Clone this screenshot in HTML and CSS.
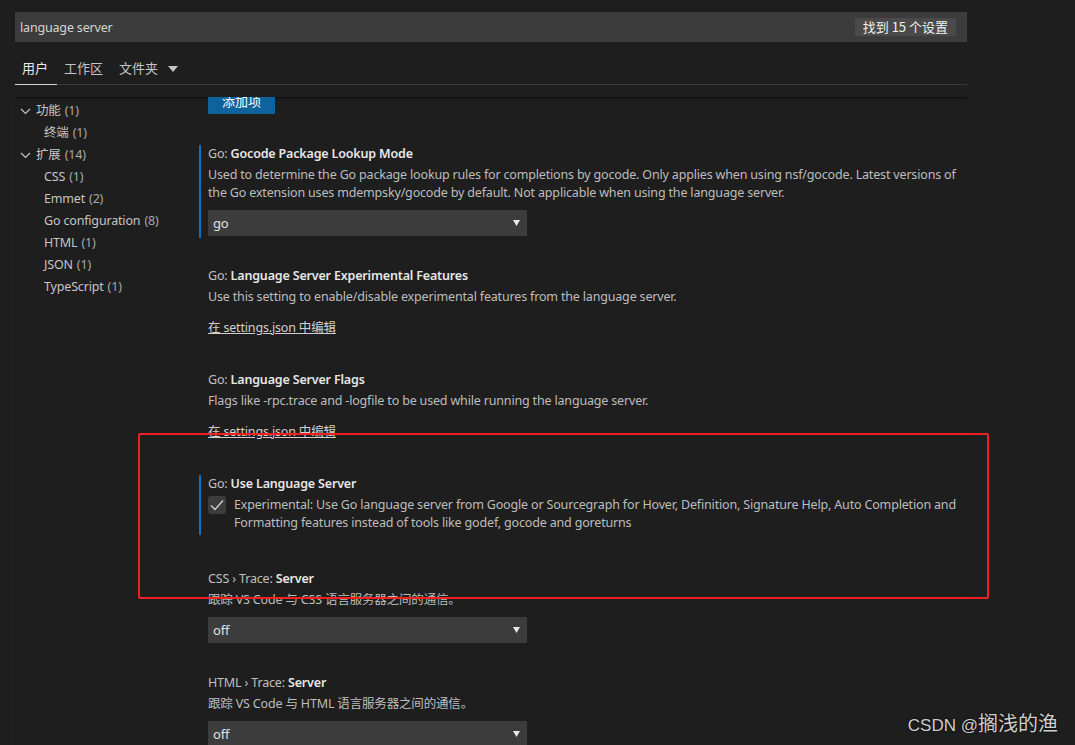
FILE: index.html
```html
<!DOCTYPE html>
<html lang="zh">
<head>
<meta charset="utf-8">
<title>设置</title>
<link rel="stylesheet" href="styles.css">
</head>
<body>
<div class="page">
  <div class="search">
    <span class="search-text">language server</span>
    <span class="badge">找到 15 个设置</span>
  </div>
  <div class="tabs">
    <span class="tab active">用户</span>
    <span class="tab">工作区</span>
    <span class="tab">文件夹 <svg class="caret" width="10" height="6" viewBox="0 0 10 6"><path d="M0 0h10L5 6z" fill="#c5c5c5"/></svg></span>
  </div>
  <div class="gap"></div>
  <div class="body">
    <nav class="tree">
      <div class="row l1"><svg class="chev" width="11" height="7" viewBox="0 0 11 7"><path d="M1 1l4.5 4.5L10 1" fill="none" stroke="#c5c5c5" stroke-width="1.2"/></svg>功能 <span class="cnt">(1)</span></div>
      <div class="row l2">终端 <span class="cnt">(1)</span></div>
      <div class="row l1"><svg class="chev" width="11" height="7" viewBox="0 0 11 7"><path d="M1 1l4.5 4.5L10 1" fill="none" stroke="#c5c5c5" stroke-width="1.2"/></svg>扩展 <span class="cnt">(14)</span></div>
      <div class="row l2">CSS <span class="cnt">(1)</span></div>
      <div class="row l2">Emmet <span class="cnt">(2)</span></div>
      <div class="row l2">Go configuration <span class="cnt">(8)</span></div>
      <div class="row l2">HTML <span class="cnt">(1)</span></div>
      <div class="row l2">JSON <span class="cnt">(1)</span></div>
      <div class="row l2">TypeScript <span class="cnt">(1)</span></div>
    </nav>
    <main class="list">
      <div class="top-btn"><span class="btn">添加项</span></div>

      <section class="item focus after-select">
        <div class="title"><span class="cat">Go: </span><b>Gocode Package Lookup Mode</b></div>
        <div class="desc">Used to determine the Go package lookup rules for completions by gocode. Only applies when using nsf/gocode. Latest versions of the Go extension uses mdempsky/gocode by default. Not applicable when using the language server.</div>
        <div class="select"><span>go</span><svg width="7" height="6" viewBox="0 0 7 6"><path d="M0 0h7L3.5 6z" fill="#e8e8e8"/></svg></div>
      </section>

      <section class="item after-link">
        <div class="title"><span class="cat">Go: </span><b>Language Server Experimental Features</b></div>
        <div class="desc">Use this setting to enable/disable experimental features from the language server.</div>
        <a class="link">在 settings.json 中编辑</a>
      </section>

      <section class="item after-link">
        <div class="title"><span class="cat">Go: </span><b>Language Server Flags</b></div>
        <div class="desc">Flags like -rpc.trace and -logfile to be used while running the language server.</div>
        <a class="link">在 settings.json 中编辑</a>
      </section>

      <section class="item focus after-check">
        <div class="title"><span class="cat">Go: </span><b>Use Language Server</b></div>
        <div class="check-row">
          <span class="checkbox"><svg width="14" height="12" viewBox="0 0 14 12"><path d="M1 6.5l4 4L13 1.5" fill="none" stroke="#d0d0d0" stroke-width="1.4"/></svg></span>
          <div class="desc">Experimental: Use Go language server from Google or Sourcegraph for Hover, Definition, Signature Help, Auto Completion and Formatting features instead of tools like godef, gocode and goreturns</div>
        </div>
      </section>

      <section class="item after-select">
        <div class="title"><span class="cat">CSS › Trace: </span><b>Server</b></div>
        <div class="desc">跟踪 VS Code 与 CSS 语言服务器之间的通信。</div>
        <div class="select"><span>off</span><svg width="7" height="6" viewBox="0 0 7 6"><path d="M0 0h7L3.5 6z" fill="#e8e8e8"/></svg></div>
      </section>

      <section class="item after-select">
        <div class="title"><span class="cat">HTML › Trace: </span><b>Server</b></div>
        <div class="desc">跟踪 VS Code 与 HTML 语言服务器之间的通信。</div>
        <div class="select"><span>off</span><svg width="7" height="6" viewBox="0 0 7 6"><path d="M0 0h7L3.5 6z" fill="#e8e8e8"/></svg></div>
      </section>
    </main>
  </div>
</div>
<div class="annotation"></div>
<div class="watermark">CSDN @<span class="wm-cjk">搁浅的渔</span></div>
</body>
</html>
```
FILE: styles.css
```css
html, body {
  margin: 0;
  padding: 0;
  background: #1e1e1e;
  height: 100%;
  overflow: hidden;
}
body {
  font-family: "Noto Sans", "Noto Sans CJK SC", sans-serif;
  font-size: 12.5px;
  letter-spacing: -0.17px;
  color: #cccccc;
  position: relative;
}
.page {
  width: 952px;
  margin-left: 15px;
  padding-top: 12px;
}
.search {
  height: 30px;
  background: #3c3c3c;
  display: flex;
  align-items: center;
  justify-content: space-between;
  padding: 0 11px 0 5px;
}
.search-text {
  color: #d4d4d4;
}
.badge {
  background: #4a4a4a;
  color: #f0f0f0;
  font-size: 13px;
  letter-spacing: 0;
  line-height: 18px;
  padding: 0 8px;
  font-family: "Noto Sans CJK SC", sans-serif;
}
.tabs {
  height: 42px;
  border-bottom: 1px solid #3a3a3a;
  display: flex;
  align-items: flex-end;
}
.tab {
  font-family: "Noto Sans CJK SC", sans-serif;
  font-size: 13px;
  letter-spacing: 0;
  color: #c5c5c5;
  padding: 0 9px 7px 7px;
  display: flex;
  align-items: center;
  gap: 6px;
  border-bottom: 1px solid transparent;
  margin-bottom: -1px;
  line-height: 18px;
}
.tab.active {
  color: #e8e8e8;
  border-bottom-color: #d0d0d0;
}
.caret { margin-top: 1px; margin-left: 4px; }
.gap { height: 12px; }
.body {
  display: flex;
  height: 648px;
  overflow: hidden;
  box-shadow: inset 0 3px 3px -2px #0c0c0c;
}
.tree {
  width: 184px;
  flex: none;
  padding-top: 3px;
}
.row {
  height: 22px;
  line-height: 22px;
  color: #c5c5c5;
  white-space: nowrap;
  display: flex;
  align-items: center;
}
.row .cnt { color: #a8a8a8; margin-left: 4px; }
.l1 { padding-left: 5px; }
.l1 .chev { margin-right: 5px; }
.l2 { padding-left: 29px; }
.list {
  flex: 1;
  min-width: 0;
  position: relative;
}
.top-btn {
  height: 18px;
  margin-top: -1px;
  padding-left: 9px;
  margin-bottom: 31px;
}
.btn {
  display: inline-block;
  background: #0e639c;
  color: #ffffff;
  width: 67px;
  height: 18px;
  text-align: center;
  line-height: 10px;
  overflow: hidden;
  font-size: 13px;
  letter-spacing: 0;
  font-family: "Noto Sans CJK SC", sans-serif;
}
.item {
  border-left: 2px solid transparent;
  padding: 0 0 0 7px;
  width: 760px;
}
.item.focus { border-left-color: #0e70c0; }
.title {
  line-height: 18px;
  color: #c0c0c0;
}
.title b { color: #e7e7e7; font-weight: 600; }
.desc {
  line-height: 18px;
  color: #bdbdbd;
  margin-top: 3px;
}
.select {
  width: 319px;
  height: 26px;
  background: #3c3c3c;
  margin-top: 8px;
  display: flex;
  align-items: center;
  justify-content: space-between;
  padding: 0 7px 0 5px;
  box-sizing: border-box;
  color: #e0e0e0;
  font-size: 13px;
}
.link {
  display: inline-block;
  margin-top: 13px;
  line-height: 18px;
  color: #d0d0d0;
  text-decoration: underline;
}
.check-row {
  display: flex;
  align-items: flex-start;
  margin-top: 3px;
}
.check-row .desc { margin-top: 0; }
.checkbox {
  flex: none;
  width: 18px;
  height: 18px;
  background: #3c3c3c;
  border-radius: 3px;
  margin: 0 8px 0 0;
  display: flex;
  align-items: center;
  justify-content: center;
}
.after-select { margin-bottom: 29px; padding-bottom: 2px; }
.after-link { margin-bottom: 34px; }
.after-check { margin-bottom: 35px; padding-bottom: 3px; }
.annotation {
  position: absolute;
  left: 138px;
  top: 433px;
  width: 847px;
  height: 162px;
  border: 2px solid #ee2020;
  border-radius: 2px;
  pointer-events: none;
}
.watermark {
  position: absolute;
  right: 17px;
  top: 711px;
  font-family: "Liberation Sans", "Noto Sans CJK SC", sans-serif;
  font-size: 17px;
  letter-spacing: 0;
  line-height: 24px;
  color: #cfcfcf;
  text-shadow: 0 0 2px #000;
}
.wm-cjk {
  font-family: "Noto Sans CJK SC", sans-serif;
  font-size: 20px;
}
```
